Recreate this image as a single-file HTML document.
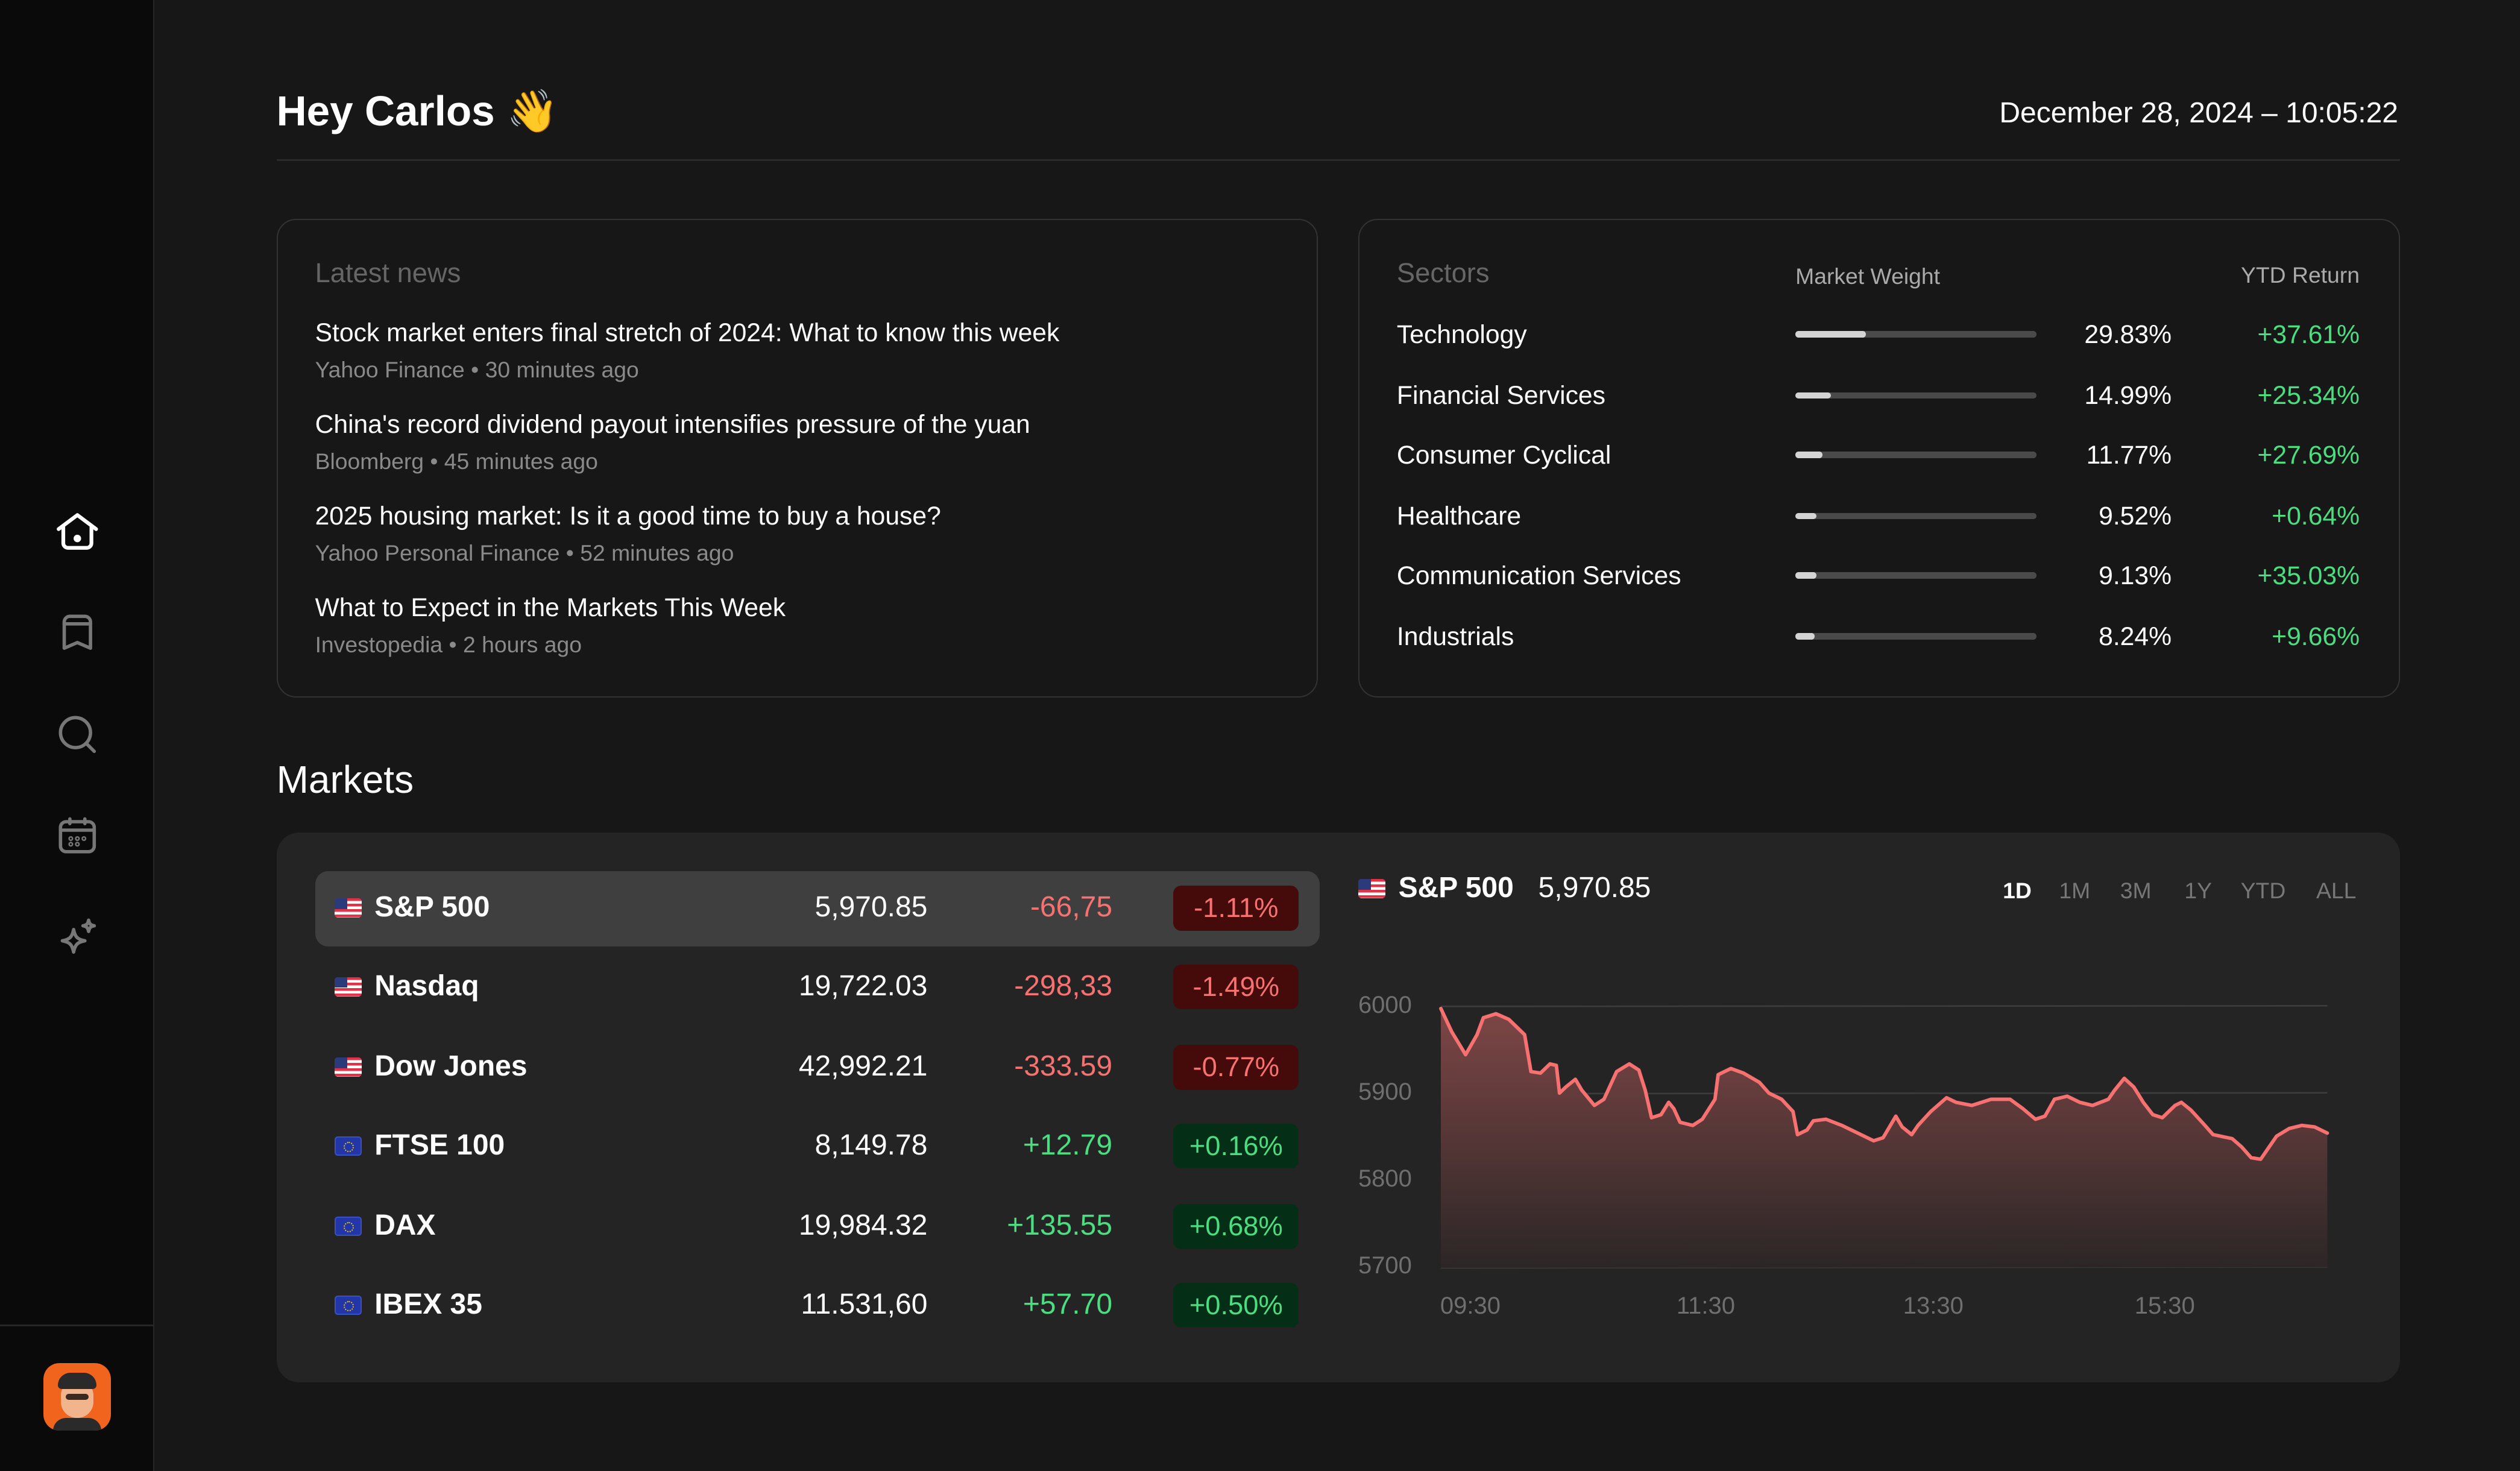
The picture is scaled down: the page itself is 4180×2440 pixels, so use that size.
<!DOCTYPE html>
<html><head><meta charset="utf-8">
<style>
*{box-sizing:border-box;margin:0;padding:0}
html,body{background:#171717}
body{zoom:2.6662;width:1568px;height:915px;position:relative;overflow:hidden;font-family:"Liberation Sans",sans-serif;color:#fff}
.abs{position:absolute;white-space:nowrap}
.side{position:absolute;left:0;top:0;width:96px;height:915px;background:#0a0a0a;border-right:1px solid #262626}
.side .sep{position:absolute;left:0;top:824px;width:96px;height:1px;background:#262626}
.ico{position:absolute;left:34px;width:28px;height:28px}
.card{position:absolute;border:1px solid #333;border-radius:12px}
.news .h{font-size:16px;color:#fff}
.news .s{font-size:14px;color:#8a8a8a}
.bar{position:absolute;left:1117px;width:150px;height:4px;border-radius:2px;background:#4a4a4a}
.bar i{display:block;height:4px;border-radius:2px;background:#d4d4d4}
.flag{position:absolute;width:17px;height:12px;border-radius:2px;overflow:hidden}
.us{background:repeating-linear-gradient(#e0334a 0 1.7px,#fff 1.7px 3.4px)}
.us:before{content:"";position:absolute;left:0;top:0;width:8px;height:6.5px;background:#2a3a7a}
.eu{background:#2236a8;border:1px solid #3a4fc0}
.eu:before{content:"";position:absolute;left:5px;top:2.5px;width:5px;height:5px;border:1px dotted #e8c400;border-radius:50%}
.badge{position:absolute;left:730px;width:78px;height:28px;border-radius:5px;font-size:17px;text-align:center;line-height:28px}
.neg{background:#450a0a;color:#f87171}
.pos{background:#052e16;color:#4ade80}
</style></head><body>

<div class="side">
  <svg class="ico" style="top:317px" viewBox="0 0 24 24" fill="none" stroke="#fff" stroke-width="2" stroke-linecap="round" stroke-linejoin="round"><path d="M2 10.5 12 3l10 7.5"/><path d="M4.5 9.5v8.5a2.5 2.5 0 0 0 2.5 2.5h10a2.5 2.5 0 0 0 2.5-2.5V9.5"/><circle cx="12" cy="15.5" r="1" fill="#fff"/></svg>
  <svg class="ico" style="top:380px" viewBox="0 0 24 24" fill="none" stroke="#777" stroke-width="1.8" stroke-linecap="round" stroke-linejoin="round"><path d="M5 20V6a3 3 0 0 1 3-3h8a3 3 0 0 1 3 3v14l-7-3z"/><path d="M5 7h14"/></svg>
  <svg class="ico" style="top:443px" viewBox="0 0 24 24" fill="none" stroke="#777" stroke-width="1.8" stroke-linecap="round"><circle cx="11" cy="11" r="8"/><path d="M17 17l4 4"/></svg>
  <svg class="ico" style="top:506px" viewBox="0 0 24 24" fill="none" stroke="#777" stroke-width="1.8" stroke-linecap="round"><rect x="3" y="4.5" width="18" height="16" rx="3"/><path d="M3 9h18M8 3v2.5M16 3v2.5"/><circle cx="8.5" cy="13.5" r=".4"/><circle cx="12" cy="13.5" r=".4"/><circle cx="15.5" cy="13.5" r=".4"/><circle cx="8.5" cy="16.5" r=".4"/><circle cx="12" cy="16.5" r=".4"/></svg>
  <svg class="ico" style="top:569px" viewBox="0 0 24 24" fill="none" stroke="#777" stroke-width="1.8" stroke-linejoin="round"><path d="M10 8c.8 4 2 5.2 6 6-4 .8-5.2 2-6 6-.8-4-2-5.2-6-6 4-.8 5.2-2 6-6z"/><path d="M18 3c.4 2 1 2.6 3 3-2 .4-2.6 1-3 3-.4-2-1-2.6-3-3 2-.4 2.6-1 3-3z"/></svg>
  <div class="sep"></div>
  <div style="position:absolute;left:27px;top:848px;width:42px;height:42px;border-radius:10px;background:#f0641e;overflow:hidden">
    <div style="position:absolute;left:11px;top:10px;width:20px;height:24px;border-radius:10px;background:#f2b48c"></div>
    <div style="position:absolute;left:9px;top:6px;width:24px;height:10px;border-radius:10px 10px 3px 3px;background:#2a2a2a"></div>
    <div style="position:absolute;left:14px;top:19px;width:14px;height:4px;background:#3a2a20;border-radius:2px"></div>
    <div style="position:absolute;left:6px;top:34px;width:30px;height:10px;border-radius:8px 8px 0 0;background:#2a2a2a"></div>
  </div>
</div>

<div class="abs" style="left:172px;top:54px;font-size:26px;font-weight:bold">Hey Carlos 👋</div>
<div class="abs" style="right:76px;top:60px;font-size:18px">December 28, 2024 – 10:05:22</div>
<div class="abs" style="left:172px;top:99px;width:1321px;height:1px;background:#2a2a2a"></div>

<div class="card" style="left:172px;top:136px;width:648px;height:298px"></div>
<div class="news">
<div class="abs" style="left:196px;top:160px;font-size:17px;color:#666">Latest news</div>
<div class="abs h" style="left:196px;top:198px">Stock market enters final stretch of 2024: What to know this week</div>
<div class="abs s" style="left:196px;top:222px">Yahoo Finance • 30 minutes ago</div>
<div class="abs h" style="left:196px;top:255px">China's record dividend payout intensifies pressure of the yuan</div>
<div class="abs s" style="left:196px;top:279px">Bloomberg • 45 minutes ago</div>
<div class="abs h" style="left:196px;top:312px">2025 housing market: Is it a good time to buy a house?</div>
<div class="abs s" style="left:196px;top:336px">Yahoo Personal Finance • 52 minutes ago</div>
<div class="abs h" style="left:196px;top:369px">What to Expect in the Markets This Week</div>
<div class="abs s" style="left:196px;top:393px">Investopedia • 2 hours ago</div>
</div>

<div class="card" style="left:845px;top:136px;width:648px;height:298px"></div>
<div class="abs" style="left:869px;top:160px;font-size:17px;color:#666">Sectors</div>
<div class="abs" style="left:1117px;top:164px;font-size:14px;color:#aaa">Market Weight</div>
<div class="abs" style="right:100px;top:163px;font-size:14px;color:#aaa">YTD Return</div>

<div style="font-size:16px">
<div class="abs" style="left:869px;top:199px">Technology</div><div class="bar" style="top:206px"><i style="width:44px"></i></div><div class="abs" style="right:217px;top:199px">29.83%</div><div class="abs" style="right:100px;top:199px;color:#4ade80">+37.61%</div>
<div class="abs" style="left:869px;top:237px">Financial Services</div><div class="bar" style="top:244px"><i style="width:22px"></i></div><div class="abs" style="right:217px;top:237px">14.99%</div><div class="abs" style="right:100px;top:237px;color:#4ade80">+25.34%</div>
<div class="abs" style="left:869px;top:274px">Consumer Cyclical</div><div class="bar" style="top:281px"><i style="width:17px"></i></div><div class="abs" style="right:217px;top:274px">11.77%</div><div class="abs" style="right:100px;top:274px;color:#4ade80">+27.69%</div>
<div class="abs" style="left:869px;top:312px">Healthcare</div><div class="bar" style="top:319px"><i style="width:13px"></i></div><div class="abs" style="right:217px;top:312px">9.52%</div><div class="abs" style="right:100px;top:312px;color:#4ade80">+0.64%</div>
<div class="abs" style="left:869px;top:349px">Communication Services</div><div class="bar" style="top:356px"><i style="width:13px"></i></div><div class="abs" style="right:217px;top:349px">9.13%</div><div class="abs" style="right:100px;top:349px;color:#4ade80">+35.03%</div>
<div class="abs" style="left:869px;top:387px">Industrials</div><div class="bar" style="top:394px"><i style="width:12px"></i></div><div class="abs" style="right:217px;top:387px">8.24%</div><div class="abs" style="right:100px;top:387px;color:#4ade80">+9.66%</div>
</div>

<div class="abs" style="left:172px;top:471px;font-size:24px">Markets</div>
<div style="position:absolute;left:172px;top:518px;width:1321px;height:342px;background:#242424;border-radius:14px"></div>
<div style="position:absolute;left:196px;top:542px;width:625px;height:47px;background:#3f3f3f;border-radius:8px"></div>

<div style="font-size:18px">
<div class="flag us" style="left:208px;top:559px"></div><div class="abs" style="left:233px;top:554px;font-weight:bold">S&amp;P 500</div><div class="abs" style="right:991px;top:554px">5,970.85</div><div class="abs" style="right:876px;top:554px;color:#f87171">-66,75</div><div class="badge neg" style="top:551px">-1.11%</div>
<div class="flag us" style="left:208px;top:608px"></div><div class="abs" style="left:233px;top:603px;font-weight:bold">Nasdaq</div><div class="abs" style="right:991px;top:603px">19,722.03</div><div class="abs" style="right:876px;top:603px;color:#f87171">-298,33</div><div class="badge neg" style="top:600px">-1.49%</div>
<div class="flag us" style="left:208px;top:658px"></div><div class="abs" style="left:233px;top:653px;font-weight:bold">Dow Jones</div><div class="abs" style="right:991px;top:653px">42,992.21</div><div class="abs" style="right:876px;top:653px;color:#f87171">-333.59</div><div class="badge neg" style="top:650px">-0.77%</div>
<div class="flag eu" style="left:208px;top:707px"></div><div class="abs" style="left:233px;top:702px;font-weight:bold">FTSE 100</div><div class="abs" style="right:991px;top:702px">8,149.78</div><div class="abs" style="right:876px;top:702px;color:#4ade80">+12.79</div><div class="badge pos" style="top:699px">+0.16%</div>
<div class="flag eu" style="left:208px;top:757px"></div><div class="abs" style="left:233px;top:752px;font-weight:bold">DAX</div><div class="abs" style="right:991px;top:752px">19,984.32</div><div class="abs" style="right:876px;top:752px;color:#4ade80">+135.55</div><div class="badge pos" style="top:749px">+0.68%</div>
<div class="flag eu" style="left:208px;top:806px"></div><div class="abs" style="left:233px;top:801px;font-weight:bold">IBEX 35</div><div class="abs" style="right:991px;top:801px">11.531,60</div><div class="abs" style="right:876px;top:801px;color:#4ade80">+57.70</div><div class="badge pos" style="top:798px">+0.50%</div>
</div>

<div class="flag us" style="left:845px;top:547px"></div>
<div class="abs" style="left:870px;top:542px;font-size:18px;font-weight:bold">S&amp;P 500</div>
<div class="abs" style="left:957px;top:542px;font-size:18px">5,970.85</div>
<div style="font-size:14px;color:#777">
<div class="abs" style="left:1246px;top:546px;color:#fff;font-weight:bold">1D</div>
<div class="abs" style="left:1281px;top:546px">1M</div>
<div class="abs" style="left:1319px;top:546px">3M</div>
<div class="abs" style="left:1359px;top:546px">1Y</div>
<div class="abs" style="left:1394px;top:546px">YTD</div>
<div class="abs" style="left:1441px;top:546px">ALL</div>
</div>
<div style="font-size:15px;color:#6f6f6f">
<div class="abs" style="left:845px;top:617px">6000</div>
<div class="abs" style="left:845px;top:671px">5900</div>
<div class="abs" style="left:845px;top:725px">5800</div>
<div class="abs" style="left:845px;top:779px">5700</div>
<div class="abs" style="left:896px;top:804px">09:30</div>
<div class="abs" style="left:1043px;top:804px">11:30</div>
<div class="abs" style="left:1184px;top:804px">13:30</div>
<div class="abs" style="left:1328px;top:804px">15:30</div>
</div>

<svg style="position:absolute;left:844px;top:525px;width:619px;height:300px" viewBox="0 0 1568 1568" preserveAspectRatio="none">
<defs><linearGradient id="g" x1="0" y1="0" x2="0" y2="1"><stop offset="0" stop-color="#7e4646"/><stop offset="1" stop-color="#2c2626"/></linearGradient></defs>
<line x1="133" y1="528" x2="1530" y2="526" stroke="#3c3c3c" stroke-width="1" vector-effect="non-scaling-stroke"/>
<line x1="133" y1="812" x2="1530" y2="809" stroke="#3c3c3c" stroke-width="1" vector-effect="non-scaling-stroke"/>
<line x1="133" y1="1095" x2="1530" y2="1092" stroke="#3c3c3c" stroke-width="1" vector-effect="non-scaling-stroke"/>
<line x1="133" y1="1378" x2="1530" y2="1375" stroke="#3c3c3c" stroke-width="1" vector-effect="non-scaling-stroke"/>
<path d="M133 535 L150 610 L172 685 L190 620 L200 565 L220 552 L240 570 L265 620 L275 740 L290 745 L305 715 L315 720 L320 810 L330 790 L345 765 L355 800 L375 850 L390 830 L410 740 L430 715 L445 735 L455 800 L465 890 L480 880 L492 840 L500 860 L510 905 L530 915 L545 895 L565 830 L570 750 L590 730 L610 745 L635 775 L650 810 L670 830 L688 870 L695 945 L710 930 L720 900 L740 895 L765 915 L790 940 L815 965 L830 955 L850 885 L860 920 L875 945 L885 915 L905 870 L930 825 L945 840 L970 850 L1000 830 L1030 830 L1050 860 L1070 895 L1085 885 L1100 830 L1120 820 L1140 840 L1160 850 L1185 830 L1195 800 L1210 762 L1225 790 L1240 840 L1255 880 L1270 890 L1290 850 L1300 840 L1315 865 L1335 910 L1350 945 L1380 958 L1395 985 L1410 1020 L1425 1025 L1440 980 L1450 950 L1470 925 L1490 915 L1510 920 L1530 940 L1530 1376 L133 1378 Z" fill="url(#g)"/>
<path d="M133 535 L150 610 L172 685 L190 620 L200 565 L220 552 L240 570 L265 620 L275 740 L290 745 L305 715 L315 720 L320 810 L330 790 L345 765 L355 800 L375 850 L390 830 L410 740 L430 715 L445 735 L455 800 L465 890 L480 880 L492 840 L500 860 L510 905 L530 915 L545 895 L565 830 L570 750 L590 730 L610 745 L635 775 L650 810 L670 830 L688 870 L695 945 L710 930 L720 900 L740 895 L765 915 L790 940 L815 965 L830 955 L850 885 L860 920 L875 945 L885 915 L905 870 L930 825 L945 840 L970 850 L1000 830 L1030 830 L1050 860 L1070 895 L1085 885 L1100 830 L1120 820 L1140 840 L1160 850 L1185 830 L1195 800 L1210 762 L1225 790 L1240 840 L1255 880 L1270 890 L1290 850 L1300 840 L1315 865 L1335 910 L1350 945 L1380 958 L1395 985 L1410 1020 L1425 1025 L1440 980 L1450 950 L1470 925 L1490 915 L1510 920 L1530 940" fill="none" stroke="#f87171" stroke-width="2.2" stroke-linejoin="round" stroke-linecap="round" vector-effect="non-scaling-stroke"/>
</svg>
</body></html>
